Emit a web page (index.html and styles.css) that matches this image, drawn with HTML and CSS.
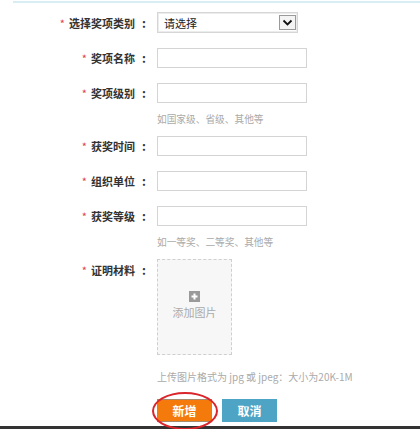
FILE: index.html
```html
<!DOCTYPE html>
<html lang="zh-CN">
<head>
<meta charset="utf-8">
<title>新增奖项</title>
<link rel="stylesheet" href="styles.css">
</head>
<body>
<div class="topline"></div>
<form class="form">
  <div class="row">
    <label class="label"><span class="req">*</span>选择奖项类别<span class="colon">:</span></label>
    <div class="field">
      <div class="select"><span>请选择</span><span class="arrow"><svg width="11" height="8" viewBox="0 0 11 8"><path d="M1.5 1.5 L5.5 5.5 L9.5 1.5" fill="none" stroke="#111" stroke-width="1.8"/></svg></span></div>
    </div>
  </div>
  <div class="row">
    <label class="label"><span class="req">*</span>奖项名称<span class="colon">:</span></label>
    <div class="field"><div class="input"></div></div>
  </div>
  <div class="row">
    <label class="label"><span class="req">*</span>奖项级别<span class="colon">:</span></label>
    <div class="field"><div class="input"></div><div class="hint">如国家级、省级、其他等</div></div>
  </div>
  <div class="row">
    <label class="label"><span class="req">*</span>获奖时间<span class="colon">:</span></label>
    <div class="field"><div class="input"></div></div>
  </div>
  <div class="row">
    <label class="label"><span class="req">*</span>组织单位<span class="colon">:</span></label>
    <div class="field"><div class="input"></div></div>
  </div>
  <div class="row">
    <label class="label"><span class="req">*</span>获奖等级<span class="colon">:</span></label>
    <div class="field"><div class="input"></div><div class="hint">如一等奖、二等奖、其他等</div></div>
  </div>
  <div class="row">
    <label class="label label-top"><span class="req">*</span>证明材料<span class="colon">:</span></label>
    <div class="field">
      <div class="upload">
        <span class="plus"><svg width="11" height="11" viewBox="0 0 11 11"><rect width="11" height="11" fill="#9a9a9a"/><path d="M5.5 2.5 V8.5 M2.5 5.5 H8.5" stroke="#fff" stroke-width="2"/></svg></span>
        <span class="upload-text">添加图片</span>
      </div>
      <div class="upload-hint">上传图片格式为 jpg 或 jpeg：大小为20K-1M</div>
    </div>
  </div>
  <div class="row row-last">
    <div class="label"></div>
    <div class="field buttons">
      <span class="btn-wrap">
        <button type="button" class="btn btn-add">新增</button>
        <span class="circle"></span>
      </span>
      <button type="button" class="btn btn-cancel">取消</button>
    </div>
  </div>
</form>
<div class="bottombar"></div>
</body>
</html>
```

FILE: styles.css
```css
html, body {
  margin: 0;
  padding: 0;
  background: #fff;
  overflow: hidden;
}
body {
  font-family: "Noto Sans CJK SC", "Noto Sans", sans-serif;
  color: #333;
  font-size: 11px;
}
.topline {
  margin: 1px 0 0 13px;
  height: 2px;
  background: #d8eef5;
}
.form {
  padding-top: 10px;
}
.row {
  display: grid;
  grid-template-columns: 150px 1fr;
  column-gap: 7px;
  align-items: start;
  margin-bottom: 15px;
}
.row-last {
  margin-bottom: 0;
}
.label {
  height: 20px;
  line-height: 20px;
  text-align: right;
  font-weight: bold;
  font-size: 11px;
  color: #333;
  white-space: nowrap;
}
.colon {
  display: inline-block;
  width: 15px;
  padding-right: 4px;
  box-sizing: border-box;
  text-align: right;
  font-weight: bold;
  font-size: 12px;
}
.label-top {
  padding-top: 1px;
}
.req {
  color: #e0424a;
  font-weight: normal;
  font-size: 11px;
  margin-right: 4px;
}
.field {
  display: flex;
  flex-direction: column;
  align-items: flex-start;
}
.select {
  box-sizing: border-box;
  width: 141px;
  height: 21px;
  border: 1px solid #d6d6d6;
  box-shadow: inset 0 0 0 1px #ececec;
  display: flex;
  align-items: center;
  justify-content: space-between;
  padding: 0 1px 0 6px;
  font-size: 11px;
  color: #222;
  margin-top: -1px;
}
.arrow {
  box-sizing: border-box;
  width: 17px;
  height: 15px;
  border: 1px solid #9a9a9a;
  background: #f4f4f4;
  display: flex;
  align-items: center;
  justify-content: center;
}
.input {
  box-sizing: border-box;
  width: 150px;
  height: 20px;
  border: 1px solid #d4d4d4;
  background: #fff;
}
.hint {
  margin-top: 9px;
  margin-bottom: -5px;
  line-height: 14px;
  font-size: 9.7px;
  color: #aaa;
}
.upload {
  box-sizing: border-box;
  width: 75px;
  height: 96px;
  border: 1px dashed #cfcfcf;
  background: #f7f7f7;
  display: flex;
  flex-direction: column;
  align-items: center;
  padding-top: 29px;
}
.plus {
  display: block;
  height: 11px;
}
.upload-text {
  margin-top: 5px;
  font-size: 11px;
  color: #aaa;
  line-height: 14px;
}
.upload-hint {
  margin-top: 15px;
  line-height: 14px;
  font-size: 10px;
  color: #aaa;
}
.buttons {
  flex-direction: row;
  gap: 10px;
}
.btn-wrap {
  position: relative;
  display: block;
}
.btn {
  box-sizing: border-box;
  width: 55px;
  height: 23px;
  border: 1px solid transparent;
  font-family: inherit;
  font-weight: bold;
  font-size: 12px;
  color: #fff;
  padding: 0;
  margin: 0;
  display: block;
}
.btn-add {
  background: #f57a0c;
  border-color: #a78b6e;
}
.btn-cancel {
  background: #4ea4c4;
  border-color: #4ea4c4;
}
.circle {
  position: absolute;
  left: -5px;
  top: -7px;
  width: 66px;
  height: 38px;
  border: 2px solid #d9252b;
  border-radius: 50%;
  box-sizing: border-box;
}
.bottombar {
  margin-top: 4px;
  height: 6px;
  background: #333;
}
```
